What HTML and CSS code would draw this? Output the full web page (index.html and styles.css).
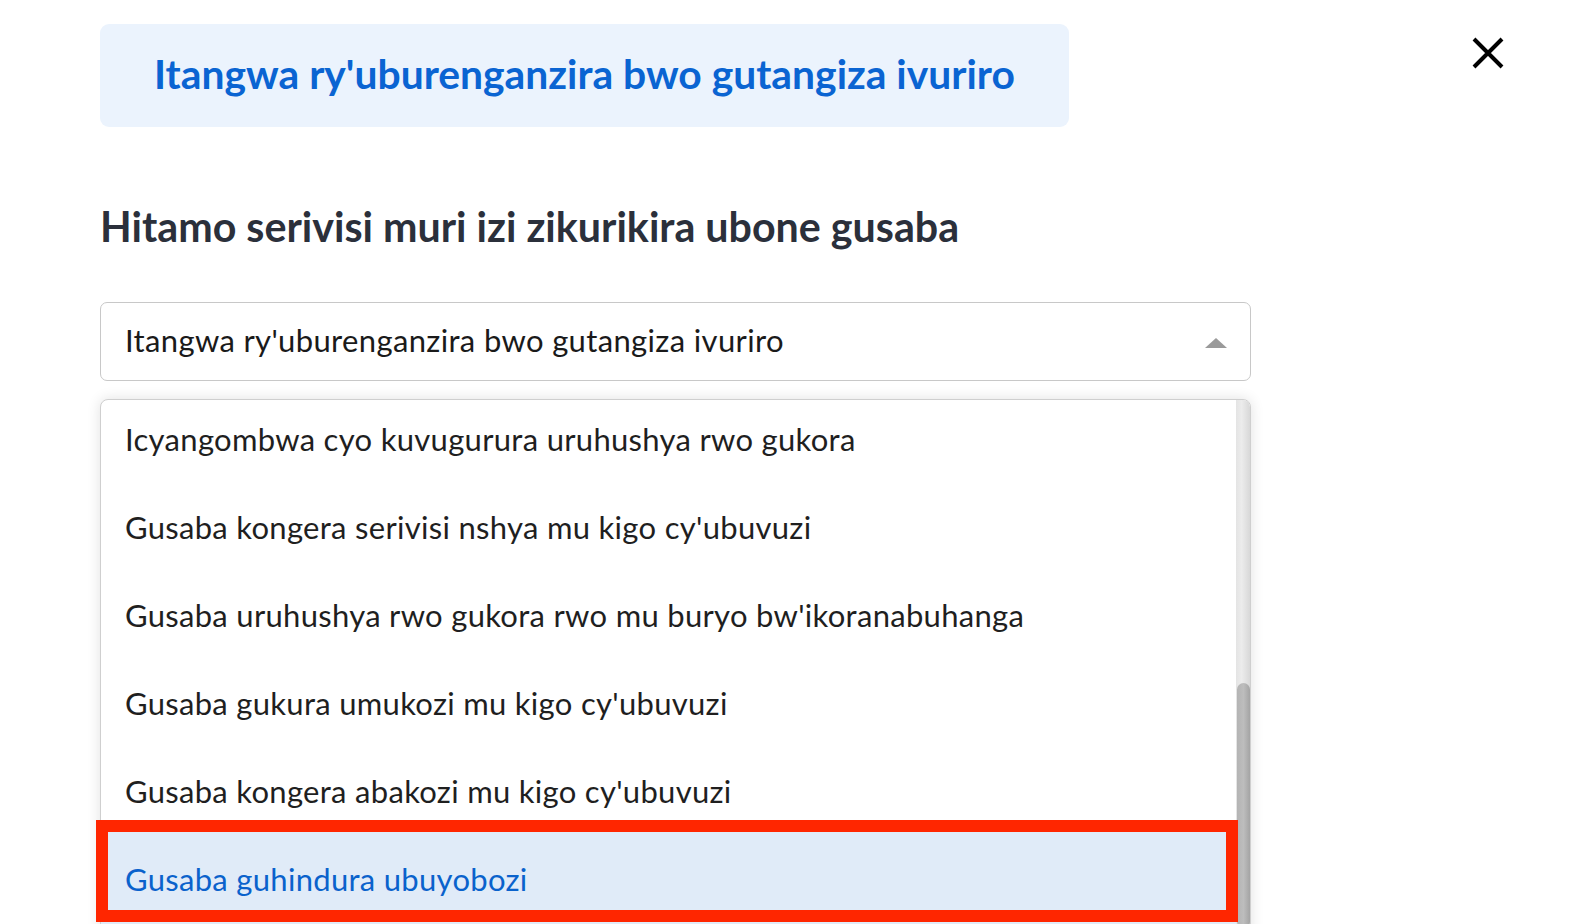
FILE: index.html
```html
<!DOCTYPE html>
<html lang="rw">
<head>
<meta charset="utf-8">
<title>Hitamo serivisi</title>
<link rel="stylesheet" href="styles.css">
</head>
<body>
<div class="page">
  <div class="top">
    <div class="title-box">Itangwa ry'uburenganzira bwo gutangiza ivuriro</div>
    <button class="close" aria-label="Close">
      <svg width="32" height="32" viewBox="0 0 32 32"><path d="M2 2 L30 30 M30 2 L2 30" stroke="#000" stroke-width="4" stroke-linecap="butt" fill="none"/></svg>
    </button>
  </div>
  <h2 class="heading">Hitamo serivisi muri izi zikurikira ubone gusaba</h2>
  <div class="select">
    <span class="select-value">Itangwa ry'uburenganzira bwo gutangiza ivuriro</span>
    <span class="arrow"></span>
  </div>
  <div class="dropdown">
    <ul class="options">
      <li class="option">Icyangombwa cyo kuvugurura uruhushya rwo gukora</li>
      <li class="option">Gusaba kongera serivisi nshya mu kigo cy'ubuvuzi</li>
      <li class="option">Gusaba uruhushya rwo gukora rwo mu buryo bw'ikoranabuhanga</li>
      <li class="option">Gusaba gukura umukozi mu kigo cy'ubuvuzi</li>
      <li class="option">Gusaba kongera abakozi mu kigo cy'ubuvuzi</li>
      <li class="option active">Gusaba guhindura ubuyobozi<span class="mark"></span></li>
    </ul>
    <div class="scrollbar"><div class="thumb"></div></div>
  </div>
</div>
</body>
</html>
```

FILE: styles.css
```css
html, body {
  margin: 0;
  padding: 0;
  background: #fff;
  height: 924px;
  overflow: hidden;
}
body {
  font-family: Lato, "Noto Sans", "Liberation Sans", sans-serif;
}
.page {
  padding: 24px 0 0 100px;
}
.top {
  display: flex;
  align-items: flex-start;
}
.title-box {
  width: 969px;
  height: 103px;
  box-sizing: border-box;
  background: #ebf3fd;
  border-radius: 9px;
  color: #0a64d2;
  font-weight: 700;
  font-size: 40.8px;
  display: flex;
  align-items: center;
  justify-content: center;
  padding-bottom: 4px;
}
.close {
  margin-left: 403px;
  margin-top: 13px;
  padding: 0;
  border: 0;
  background: none;
  width: 32px;
  height: 32px;
}
.close svg { display: block; }
.heading {
  margin: 73px 0 0 0;
  font-size: 41.2px;
  font-weight: 700;
  color: #2b303b;
  line-height: 52px;
}
.select {
  margin-top: 50px;
  width: 1151px;
  height: 79px;
  box-sizing: border-box;
  border: 1px solid #c8c8c8;
  border-radius: 7px;
  display: flex;
  align-items: center;
  justify-content: space-between;
  padding: 0 23px 4px 24px;
  font-size: 31px;
  letter-spacing: 0.35px;
  color: #1a1a1a;
}
.arrow {
  width: 0;
  height: 0;
  border-left: 11px solid transparent;
  border-right: 11px solid transparent;
  border-bottom: 10px solid #9a9a9a;
  margin-top: 6px;
}
.dropdown {
  margin-top: 18px;
  width: 1151px;
  height: 560px;
  box-sizing: border-box;
  border: 1px solid #cfcfcf;
  border-radius: 8px 8px 0 0;
  box-shadow: 0 0 14px rgba(0, 0, 0, 0.12);
  display: flex;
  position: relative;
  background: #fff;
}
.options {
  list-style: none;
  margin: 0;
  padding: 0;
  flex: 1;
  border-top-left-radius: 8px;
}
.option {
  height: 88px;
  display: flex;
  align-items: center;
  padding-left: 24px;
  padding-bottom: 10px;
  box-sizing: border-box;
  font-size: 31px;
  letter-spacing: 0.3px;
  color: #1f1f1f;
}
.option.active {
  background: #e0ebf8;
  box-shadow: 0 -9px 0 #e0ebf8;
  color: #0a62cc;
  position: relative;
}
.mark {
  position: absolute;
  left: -5px;
  right: -2px;
  top: -20px;
  height: 102px;
  box-sizing: border-box;
  border: 12px solid #ff2600;
  z-index: 2;
}
.scrollbar {
  width: 14px;
  border-top-right-radius: 7px;
  background: linear-gradient(to right, #e4e4e4, #ececec 40%, #d8d8d8);
  position: relative;
}
.thumb {
  position: absolute;
  left: 1px;
  right: 0;
  top: 283px;
  bottom: 30px;
  border-radius: 7px;
  background: linear-gradient(to right, #b4b4b4, #bdbdbd 50%, #a4a4a4);
}
```
